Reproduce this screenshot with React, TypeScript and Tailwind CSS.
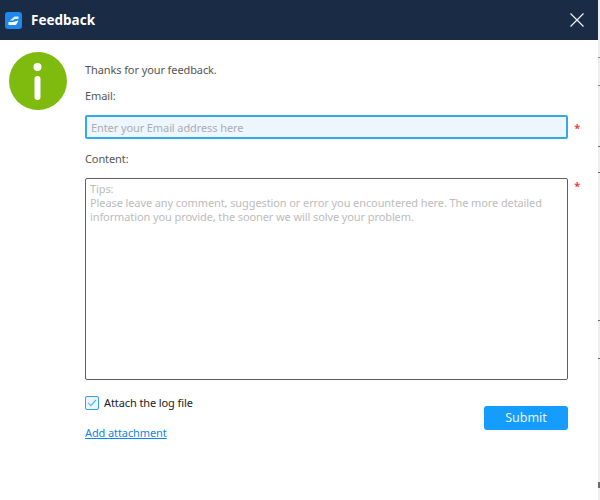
import { useState } from 'react';

const TIPS =
  'Tips:\nPlease leave any comment, suggestion or error you encountered here. The more detailed information you provide, the sooner we will solve your problem.';

function AppLogo() {
  return (
    <svg width="17" height="17" viewBox="0 0 17 17" className="shrink-0">
      <rect width="17" height="17" rx="3" fill="#1e88ee" />
      <path d="M5 8.5 L9.5 4.5 H13.5 V7 H10 L8 8.5 Z" fill="#d8ebfc" />
      <path d="M3.5 13 V10 H8 L13.5 8.5 L11 13 Z" fill="#ffffff" />
    </svg>
  );
}

function InfoBadge() {
  return (
    <svg width="58" height="58" viewBox="0 0 58 58">
      <circle cx="29" cy="29" r="29" fill="#7fba0e" />
      <circle cx="28.5" cy="15" r="4" fill="#ffffff" />
      <rect x="25.5" y="24" width="6" height="24" rx="3" fill="#ffffff" />
    </svg>
  );
}

function EdgeStrip() {
  return (
    <div className="relative w-[2px] shrink-0 bg-[#ededed]">
      <span className="absolute left-0 top-[57px] h-px w-[2px] bg-[#8a8a8a]" />
      <span className="absolute left-0 top-[85px] h-px w-[2px] bg-[#8a8a8a]" />
      <span className="absolute left-0 top-[146px] h-px w-[2px] bg-[#6a6a6a]" />
      <span className="absolute left-0 top-[172px] h-px w-[2px] bg-[#6a6a6a]" />
      <span className="absolute left-0 top-[320px] h-px w-[2px] bg-[#6a6a6a]" />
      <span className="absolute left-0 top-[358px] h-px w-[2px] bg-[#6a6a6a]" />
      <span className="absolute left-0 top-[482px] h-[6px] w-[2px] bg-[#6a6a6a]" />
    </div>
  );
}

export default function App() {
  const [attachLog, setAttachLog] = useState(true);

  return (
    <div className="flex h-[500px] w-[600px] bg-white text-[#555] [font-family:'Noto_Sans',sans-serif]">
      <div className="flex w-[598px] flex-col">
        {/* Title bar */}
        <header className="flex h-[40px] shrink-0 items-center bg-[#1a2c45] pl-[5px] pr-[14px]">
          <AppLogo />
          <h1 className="ml-[9px] text-[13.5px] font-bold text-white">Feedback</h1>
          <button type="button" aria-label="Close" className="ml-auto">
            <svg width="14" height="14" viewBox="0 0 14 14" className="block" stroke="#eef2f6" strokeWidth="1.2">
              <path d="M0.5 0.5 L13.5 13.5 M13.5 0.5 L0.5 13.5" />
            </svg>
          </button>
        </header>

        <div className="flex flex-1 pl-[9px] pt-[12px]">
          <div className="w-[76px] shrink-0">
            <InfoBadge />
          </div>

          <div className="flex w-[497px] flex-col text-[11px] tracking-[-0.1px]">
            <p className="mt-[11px] leading-[14px]">Thanks for your feedback.</p>
            <label className="mt-[12px] leading-[14px]">Email:</label>
            <div className="mt-[12px] flex items-start">
              <input
                placeholder="Enter your Email address here"
                className="h-[24px] w-[483px] rounded-[2px] border-2 border-[#35a9e8] bg-[#eef6fd] px-[4px] text-[11px] outline-none placeholder:text-[#a9adb2]"
              />
              <span className="mt-[7px] w-[12px] shrink-0 text-right text-[11px] font-bold leading-[12px] text-[#e8414f]">*</span>
            </div>

            <label className="mt-[13px] leading-[14px]">Content:</label>
            <div className="mt-[12px] flex items-start">
              <textarea
                placeholder={TIPS}
                className="h-[202px] w-[483px] resize-none rounded-[2px] border border-[#606060] px-[4px] pb-[4px] pt-[3px] text-[11px] leading-[14px] outline-none placeholder:text-[#bcbcbc]"
              />
              <span className="mt-[2px] w-[12px] shrink-0 text-right text-[11px] font-bold leading-[12px] text-[#e8414f]">*</span>
            </div>

            <div className="mt-[15px] flex w-[483px] items-start justify-between">
              <div className="flex flex-col items-start">
                <label className="flex items-center gap-[5px] text-[#222]">
                  <input
                    type="checkbox"
                    checked={attachLog}
                    onChange={e => setAttachLog(e.target.checked)}
                    className="peer sr-only"
                  />
                  <span className="flex h-[14px] w-[14px] items-center justify-center rounded-[2px] border border-[#35a0e6] bg-[#eaf5fd]">
                    {attachLog && (
                      <svg width="10" height="8" viewBox="0 0 10 8" fill="none" stroke="#5db4ea" strokeWidth="1.2">
                        <path d="M1 3.8 L3.8 6.6 L9 1" />
                      </svg>
                    )}
                  </span>
                  Attach the log file
                </label>
                <a href="#" className="mt-[14px] leading-[14px] text-[#0f86e6] underline">
                  Add attachment
                </a>
              </div>
              <button
                type="button"
                className="mt-[11px] h-[24px] w-[84px] rounded-[3px] bg-[#149cff] text-[12.5px] tracking-normal text-[#e8f5ff]"
              >
                Submit
              </button>
            </div>
          </div>
        </div>
      </div>
      <EdgeStrip />
    </div>
  );
}
